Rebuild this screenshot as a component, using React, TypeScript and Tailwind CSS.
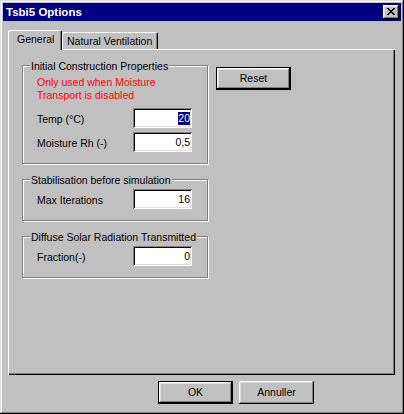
const raised =
  "shadow-[inset_-1px_-1px_#000,inset_1px_1px_#fff,inset_-2px_-2px_#808080,inset_2px_2px_#dfdfdf]";
const sunken =
  "shadow-[inset_1px_1px_#808080,inset_-1px_-1px_#fff,inset_2px_2px_#000,inset_-2px_-2px_#dfdfdf]";

function CloseGlyph() {
  // 8x7 pixel X, same as the classic caption button
  const rows = [
    "XX....XX",
    ".XX..XX.",
    "..XXXX..",
    "...XX...",
    "..XXXX..",
    ".XX..XX.",
    "XX....XX",
  ];
  return (
    <svg width="8" height="7" viewBox="0 0 8 7" shapeRendering="crispEdges">
      {rows.map((row, y) =>
        row.split("").map((c, x) =>
          c === "X" ? <rect key={`${x}-${y}`} x={x} y={y} width="1" height="1" fill="#000" /> : null
        )
      )}
    </svg>
  );
}

function Button({ label, isDefault }: { label: string; isDefault?: boolean }) {
  return (
    <div
      className={`flex h-[23px] w-[75px] items-center justify-center bg-[#c0c0c0] ${raised} ${
        isDefault ? "border border-black" : ""
      }`}
    >
      <span className="leading-[13px]">{label}</span>
    </div>
  );
}

function Field({ value, selected }: { value: string; selected?: boolean }) {
  return (
    <div className={`flex h-[20px] w-[59px] items-center justify-end bg-white pr-[2px] ${sunken}`}>
      <span className={`leading-[13px] ${selected ? "bg-[#000080] text-white" : ""}`}>{value}</span>
    </div>
  );
}

function Row({ label, value, selected }: { label: string; value: string; selected?: boolean }) {
  return (
    <div className="flex h-[20px] items-center">
      <span className="w-[96px] pt-[2px] leading-[13px]">{label}</span>
      <Field value={value} selected={selected} />
    </div>
  );
}

function GroupBox({
  title,
  className,
  children,
}: {
  title: string;
  className: string;
  children: React.ReactNode;
}) {
  return (
    <div
      className={`relative w-[186px] border border-[#808080] pl-[14px] shadow-[inset_1px_1px_#fff,1px_1px_#fff] ${className}`}
    >
      <span className="absolute left-[7px] top-[-6px] bg-[#c0c0c0] px-[1px] leading-[13px]">{title}</span>
      {children}
    </div>
  );
}

export default function App() {
  return (
    <div
      className={`flex h-[414px] w-[404px] flex-col bg-[#c0c0c0] p-[3px] font-['Liberation_Sans',Arial,sans-serif] text-[10.5px] text-black shadow-[inset_-1px_-1px_#000,inset_1px_1px_#dfdfdf,inset_-2px_-2px_#808080,inset_2px_2px_#fff]`}
    >
      {/* Caption */}
      <div className="flex h-[18px] shrink-0 items-center justify-between bg-[#000080] pl-[3px] pr-[2px]">
        <span className="text-[11.5px] font-bold leading-[16px] text-white">Tsbi5 Options</span>
        <div className={`flex h-[14px] w-[16px] items-center justify-center bg-[#c0c0c0] pb-[1px] ${raised}`}>
          <CloseGlyph />
        </div>
      </div>

      {/* Tabs */}
      <div className="ml-[5px] mt-[9px] flex h-[19px] items-end">
        <div className="relative z-10 -mb-[1px] h-[20px] w-[54px] rounded-t-[2px] bg-[#c0c0c0] pl-[9px] pt-[3px] leading-[13px] shadow-[inset_1px_1px_#fff,inset_-1px_0_#000,inset_-2px_0_#808080]">
          General
        </div>
        <div className="h-[17px] w-[96px] rounded-t-[2px] bg-[#c0c0c0] pl-[5px] pt-[3px] leading-[13px] shadow-[inset_1px_1px_#fff,inset_-1px_0_#000,inset_-2px_0_#808080]">
          Natural Ventilation
        </div>
      </div>

      {/* Tab page */}
      <div className="ml-[5px] flex h-[326px] w-[387px] shrink-0 items-start gap-[8px] pl-[14px] pt-[16px] shadow-[inset_1px_1px_#fff,inset_-1px_-1px_#000,inset_-2px_-2px_#808080]">
        <div className="flex w-[186px] flex-col">
          <GroupBox title="Initial Construction Properties" className="h-[99px] pt-[10px]">
            <p className="leading-[13px] text-[#ff0000]">
              Only used when Moisture
              <br />
              Transport is disabled
            </p>
            <div className="mt-[6px] flex flex-col gap-[4px]">
              <Row label="Temp (°C)" value="20" selected />
              <Row label="Moisture Rh (-)" value="0,5" />
            </div>
          </GroupBox>

          <GroupBox title="Stabilisation before simulation" className="mt-[15px] h-[42px] pt-[9px]">
            <Row label="Max Iterations" value="16" />
          </GroupBox>

          <GroupBox title="Diffuse Solar Radiation Transmitted" className="mt-[15px] h-[42px] pt-[9px]">
            <Row label="Fraction(-)" value="0" />
          </GroupBox>
        </div>

        <div className="mt-[2px]">
          <Button label="Reset" isDefault />
        </div>
      </div>

      {/* Dialog buttons */}
      <div className="mt-[6px] flex gap-[6px] pl-[155px]">
        <Button label="OK" isDefault />
        <Button label="Annuller" />
      </div>
    </div>
  );
}
